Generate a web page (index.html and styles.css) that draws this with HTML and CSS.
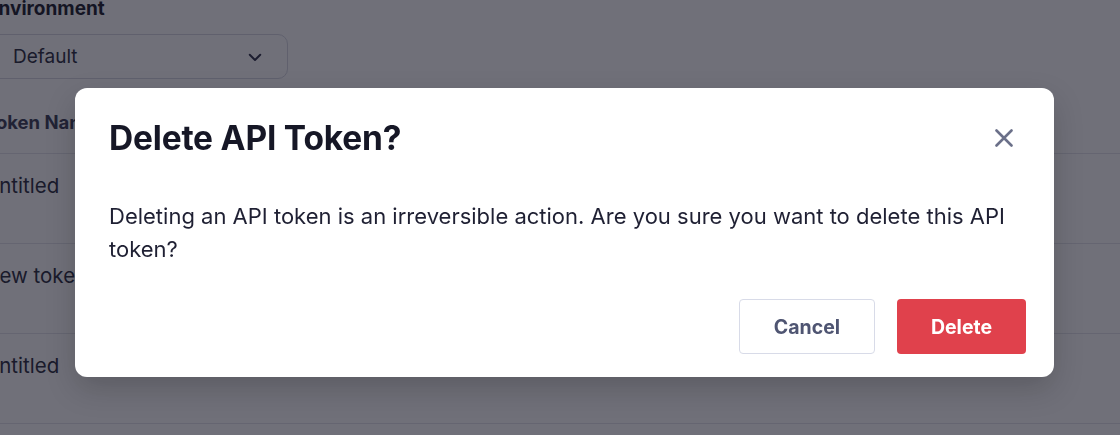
FILE: index.html
```html
<!DOCTYPE html>
<html>
<head>
<meta charset="utf-8">
<link rel="stylesheet" href="styles.css">
</head>
<body>
<main class="page">
  <section class="env">
    <div class="env-label">Environment</div>
    <div class="select">
      <span>Default</span>
      <svg class="chev" width="18" height="18" viewBox="0 0 24 24" fill="none" stroke="currentColor" stroke-width="2.6" stroke-linecap="round" stroke-linejoin="round"><path d="M5 9l7 7 7-7"/></svg>
    </div>
  </section>
  <section class="table">
    <div class="thead">Token Name</div>
    <div class="row">Untitled</div>
    <div class="row">New token</div>
    <div class="row">Untitled</div>
    <div class="row"></div>
  </section>
</main>
<div class="overlay">
  <div class="modal" role="dialog">
    <div class="modal-head">
      <h2 class="modal-title">Delete API Token?</h2>
      <button class="close" aria-label="Close">
        <svg width="18" height="18" viewBox="0 0 18 18" fill="none" stroke="currentColor" stroke-width="2.6" stroke-linecap="round"><path d="M1.5 1.5l15 15M16.5 1.5l-15 15"/></svg>
      </button>
    </div>
    <p class="modal-body">Deleting an API token is an irreversible action. Are you sure you want to delete this API token?</p>
    <div class="modal-actions">
      <button class="btn btn-cancel">Cancel</button>
      <button class="btn btn-delete">Delete</button>
    </div>
  </div>
</div>
</body>
</html>
```

FILE: styles.css
```css
* { box-sizing: border-box; }
html, body { margin: 0; padding: 0; }
body {
  width: 1120px;
  height: 435px;
  overflow: hidden;
  background: #ffffff;
  font-family: Inter, "Noto Sans", sans-serif;
  color: #1b1c2b;
}
.page {
  margin-left: -12px;
  width: 1132px;
}
.env-label {
  font-size: 19px;
  font-weight: 700;
  line-height: 18px;
  color: #1b1c2b;
  margin-left: -1px;
}
.select {
  margin-top: 16px;
  width: 300px;
  height: 45px;
  border: 1px solid #d6d8e2;
  border-radius: 10px;
  display: flex;
  align-items: center;
  justify-content: space-between;
  padding: 0 23px 0 24px;
  font-size: 19px;
  color: #2a2c3d;
}
.chev { color: #2e3048; }
.table {
  margin-top: 31px;
}
.thead {
  font-size: 18.5px;
  font-weight: 700;
  color: #3a3d55;
  height: 44px;
  border-bottom: 1px solid #e3e4ea;
  line-height: 20px;
  padding-top: 2px;
  text-indent: -3px;
}
.row {
  height: 90px;
  border-bottom: 1px solid #e3e4ea;
  font-size: 20.5px;
  color: #2a2c3d;
  padding-top: 20px;
  line-height: 24px;
  text-indent: -4px;
}
.overlay {
  position: fixed;
  inset: 0;
  background: rgba(16, 17, 32, 0.6);
  display: flex;
  justify-content: center;
  align-items: flex-start;
  padding-top: 88px;
  padding-left: 9px;
}
.modal {
  width: 979px;
  height: 289px;
  background: #ffffff;
  border-radius: 12px;
  box-shadow: 0 12px 30px rgba(0, 0, 0, 0.18);
  padding: 30px 28px 23px 34px;
  display: flex;
  flex-direction: column;
}
.modal-head {
  display: flex;
  justify-content: space-between;
  align-items: center;
  height: 40px;
}
.modal-title {
  margin: 0;
  font-size: 33.5px;
  line-height: 40px;
  font-weight: 700;
  color: #161726;
  letter-spacing: -0.2px;
}
.close {
  background: none;
  border: 0;
  padding: 0;
  width: 24px;
  height: 24px;
  margin-right: 10px;
  display: flex;
  align-items: center;
  justify-content: center;
  color: #6b7089;
}
.modal-body {
  margin: 42px 0 0;
  font-size: 22px;
  line-height: 33px;
  color: #1f2033;
}
.modal-actions {
  margin-top: auto;
  display: flex;
  justify-content: flex-end;
  gap: 22px;
}
.btn {
  height: 55px;
  border-radius: 4px;
  font-family: Inter, "Noto Sans", sans-serif;
  font-size: 19.5px;
  font-weight: 700;
}
.btn-cancel {
  width: 136px;
  background: #ffffff;
  border: 1px solid #d8dbe8;
  color: #4f5572;
}
.btn-delete {
  width: 129px;
  background: #e0414c;
  border: 0;
  color: #ffffff;
}
```
